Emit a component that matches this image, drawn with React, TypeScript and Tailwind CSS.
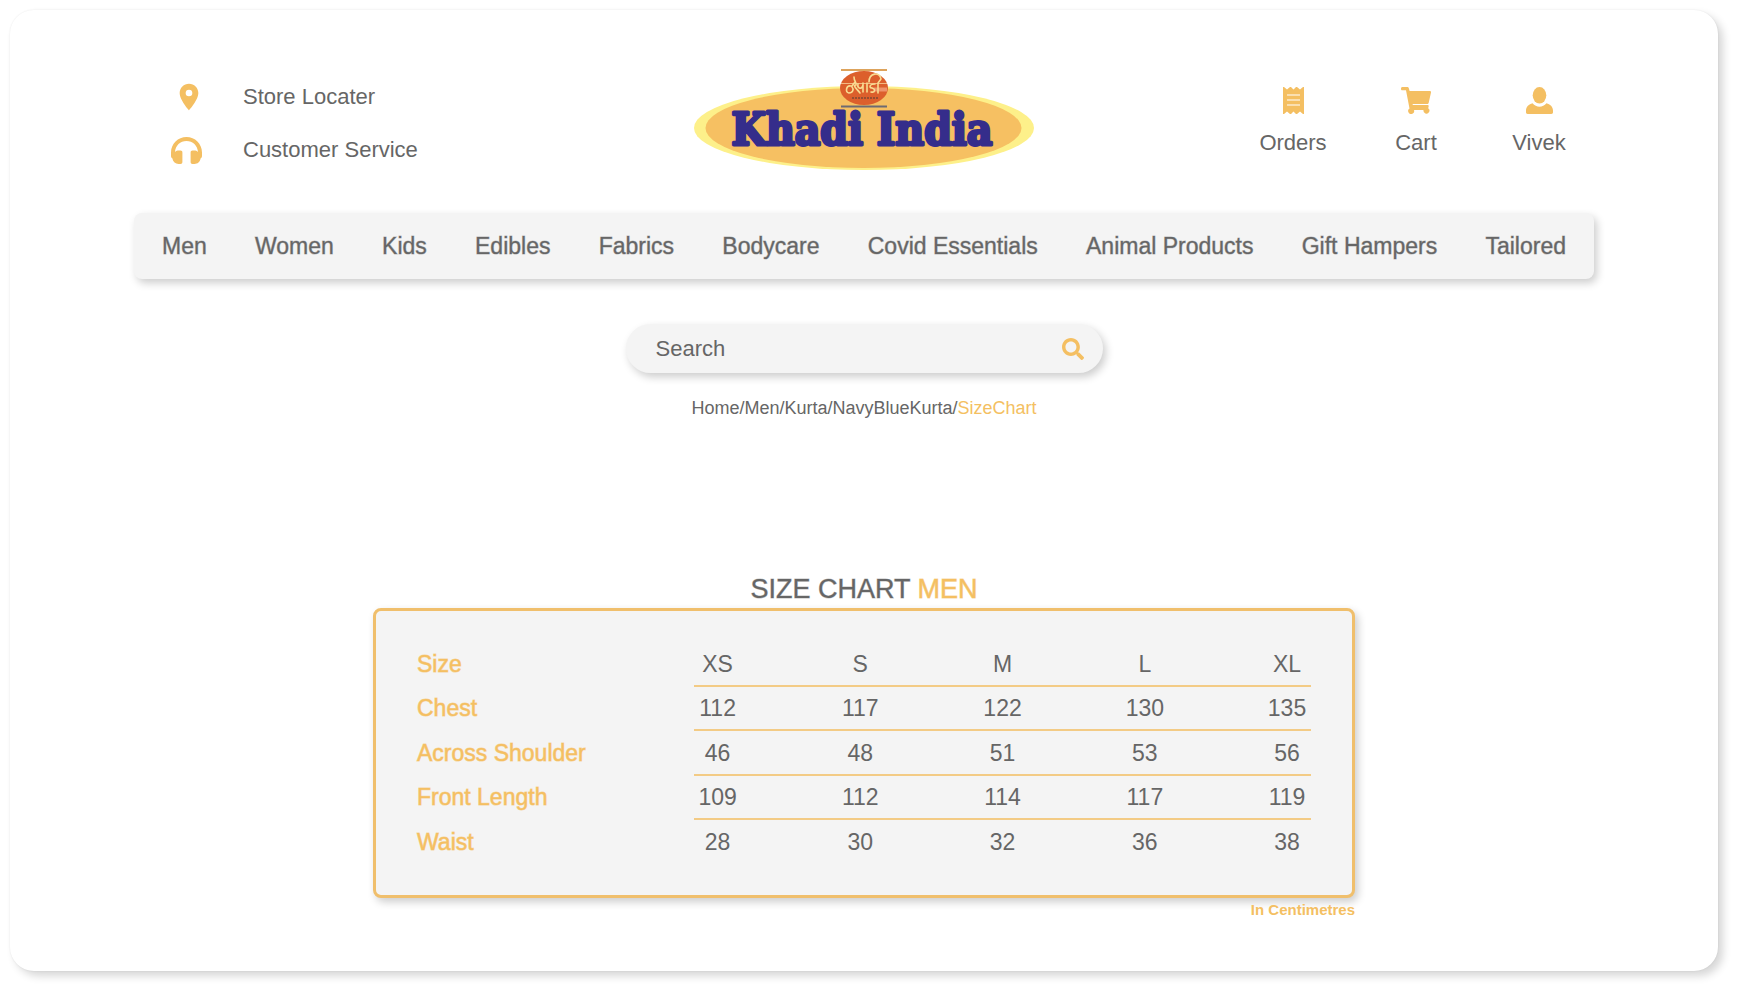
import { useState } from "react";
import { FaSearch } from "react-icons/fa";
import { MdLocationOn } from "react-icons/md";

const categories = [
  "Men",
  "Women",
  "Kids",
  "Edibles",
  "Fabrics",
  "Bodycare",
  "Covid Essentials",
  "Animal Products",
  "Gift Hampers",
  "Tailored",
];

const crumbs = ["Home", "Men", "Kurta", "NavyBlueKurta"];

const sizes = ["XS", "S", "M", "L", "XL"];

const measurements = [
  { label: "Chest", values: [112, 117, 122, 130, 135] },
  { label: "Across Shoulder", values: [46, 48, 51, 53, 56] },
  { label: "Front Length", values: [109, 112, 114, 117, 119] },
  { label: "Waist", values: [28, 30, 32, 36, 38] },
];

function HeadphonesIcon() {
  return (
    <svg viewBox="0 0 31 27" className="h-[27px] w-[31px]" fill="currentColor" aria-hidden="true">
      <path d="M15.5 0C24 0 31 6.800 31 15.500V19c0 1.300-.6 1.800-1.300 2.300C29 25 26.500 27 23.500 27h-2c-1.200 0-1.900-.7-1.900-1.900V15.500c0-1.200.7-1.900 1.900-1.900h1.500c1.700 0 2.900.5 4 1.400C26.500 8.500 21.800 4 15.500 4S4.500 8.500 4 15c1.100-.9 2.300-1.400 4-1.400h1.500c1.200 0 1.900.7 1.900 1.900v9.600c0 1.200-.7 1.900-1.900 1.900h-2c-3 0-5.500-2-6.200-5.700C.6 20.800 0 20.300 0 19v-3.500C0 6.800 7 0 15.500 0Z" />
    </svg>
  );
}

function ReceiptIcon() {
  return (
    <svg viewBox="0 0 21 27" className="h-[27px] w-[21px]" aria-hidden="true">
      <path
        fill="currentColor"
        d="M0 0h1l3 2.500L7 0h1l2.500 2.500L13 0h1l3 2.500L20 0h1v27h-1l-3-2.500-3 2.500h-1l-2.500-2.500L8 27H7l-3-2.500L1 27H0Z"
      />
      <path d="M4 8h13M4 13h13M4 18h13" stroke="#fff" strokeWidth="1.200" />
    </svg>
  );
}

function CartIcon() {
  return (
    <svg viewBox="0 0 30 27" className="h-[27px] w-[30px]" fill="currentColor" aria-hidden="true">
      <path d="M1.300 0H6c1 0 1.600.5 1.900 1.400L8.600 4H29c.8 0 1.200.6 1 1.400l-2.300 10.400c-.2.800-.7 1.200-1.500 1.200H11.600l.2 1h14.700c1 0 1.300.5 1.100 1.400l-.4 1.800a3 3 0 1 1-4.700 1.800H13a3 3 0 1 1-4.500-1.500L5 3.300H1.300C.4 3.300 0 2.600 0 1.700S.4 0 1.300 0Z" />
    </svg>
  );
}

function PersonIcon() {
  return (
    <svg viewBox="0 0 27 27" className="size-[27px]" fill="currentColor" aria-hidden="true">
      <ellipse cx="13.500" cy="8.300" rx="6.800" ry="8.300" />
      <path d="M6.500 16.300c2 2.200 4.300 3.400 7 3.400s5-1.200 7-3.400c3.500.8 6.500 3.600 6.500 7.200v1.800c0 1.100-.6 1.700-1.700 1.700H1.700C.6 27 0 26.400 0 25.300v-1.800c0-3.600 3-6.400 6.500-7.200Z" />
    </svg>
  );
}

function Logo() {
  return (
    <svg viewBox="0 0 340 104" className="h-[104px] w-[340px]" role="img" aria-label="Khadi India">
      <ellipse cx="170" cy="60" rx="170" ry="42" fill="#fdf08a" />
      <ellipse cx="169.500" cy="60" rx="158" ry="40" fill="#f6c062" />
      <ellipse cx="170" cy="20" rx="24" ry="17" fill="#dc5f2c" />
      <path d="M147 2h46" stroke="#dda35c" strokeWidth="2" />
      <path d="M147 38.500h46" stroke="#6d6a72" strokeWidth="2" />
      <path d="M147 15.500h46" stroke="#f3b983" strokeWidth="1" />
      <path d="M180 21.500h13" stroke="#ee936b" strokeWidth="4" />
      <path
        d="M157 18c-5-1-6 6-2 7 4 0 5-4 3-6M160 9c0 5 3 5 2 8-4 0 1 4 4 8M161 14l-3 4M164 16c-1 5 4 6 5 1M169 15v9M173 15v9M181 16c-6 0-6 4-3 4 4 1 3 5-1 4M184 15v10M175 14c0-9 11-11 12-3M187 11l-3 4"
        fill="none"
        stroke="#f8dc92"
        strokeWidth="1.600"
        strokeLinecap="round"
      />
      <path d="M158 30h26" stroke="#7c4a34" strokeWidth="1.500" strokeDasharray="2 1" />
      <text
        x="168"
        y="77"
        textAnchor="middle"
        fontSize="44"
        fontWeight="700"
        fill="#352d8b"
        stroke="#352d8b"
        strokeWidth="3"
        strokeLinejoin="round"
        className="font-['DejaVu_Serif_Condensed','DejaVu_Serif',serif]"
      >
        Khadi India
      </text>
    </svg>
  );
}

export default function App() {
  const [query, setQuery] = useState("");

  return (
    <div className="min-h-screen bg-white pt-[10px] pr-[20px] pb-[20px] pl-[10px] font-['Liberation_Sans',Arial,sans-serif] text-[22px] leading-[26px] text-[#666]">
      <main className="min-h-[961px] rounded-3xl bg-white px-[124px] pt-[58px] pb-12 shadow-[5px_5px_8px_rgba(0,0,0,0.16),0_0_2px_rgba(0,0,0,0.08)]">
        {/* ── Header ── */}
        <header className="grid grid-cols-[1fr_auto_1fr] items-start">
          <ul className="flex flex-col gap-[27px] pt-[16px] pl-[37px]">
            <li>
              <a href="#stores" className="flex items-center gap-[37px]">
                <span className="-my-1 flex w-[35px] justify-center text-[#f4bf62]">
                  <MdLocationOn size={32} />
                </span>
                Store Locater
              </a>
            </li>
            <li>
              <a href="#support" className="flex items-center gap-[37px]">
                <span className="-my-1 flex w-[35px] text-[#f4bf62]">
                  <HeadphonesIcon />
                </span>
                Customer Service
              </a>
            </li>
          </ul>

          <a href="#home">
            <Logo />
          </a>

          <nav aria-label="Account" className="pt-[19px]">
            <ul className="flex justify-end gap-[13px]">
              <li className="w-[110px]">
                <a href="#orders" className="flex flex-col items-center gap-[16px]">
                  <span className="text-[#f4bf62]">
                    <ReceiptIcon />
                  </span>
                  Orders
                </a>
              </li>
              <li className="w-[110px]">
                <a href="#cart" className="flex flex-col items-center gap-[16px]">
                  <span className="text-[#f4bf62]">
                    <CartIcon />
                  </span>
                  Cart
                </a>
              </li>
              <li className="w-[110px]">
                <a href="#account" className="flex flex-col items-center gap-[16px]">
                  <span className="text-[#f4bf62]">
                    <PersonIcon />
                  </span>
                  Vivek
                </a>
              </li>
            </ul>
          </nav>
        </header>

        {/* ── Categories ── */}
        <nav
          aria-label="Categories"
          className="mt-[41px] rounded-lg bg-[#f4f4f4] px-[28px] py-[20px] shadow-[3px_4px_8px_rgba(0,0,0,0.2)]"
        >
          <ul className="flex justify-between text-[23px] [-webkit-text-stroke:1px_rgba(102,102,102,0.4)]">
            {categories.map((name) => (
              <li key={name}>
                <a href="#category">{name}</a>
              </li>
            ))}
          </ul>
        </nav>

        {/* ── Search ── */}
        <form
          role="search"
          onSubmit={(e) => e.preventDefault()}
          className="mx-auto mt-[45px] flex h-[49px] max-w-[477px] items-center rounded-full bg-[#f4f4f4] pr-[19px] pl-[30px] shadow-[3px_4px_8px_rgba(0,0,0,0.2)]"
        >
          <input
            aria-label="Search"
            placeholder="Search"
            value={query}
            onChange={(e) => setQuery(e.target.value)}
            className="min-w-0 flex-1 bg-transparent outline-none placeholder:text-[#666]"
          />
          <button type="submit" aria-label="Submit search" className="text-[#f4bf62]">
            <FaSearch size={22} />
          </button>
        </form>

        <nav aria-label="Breadcrumb" className="mt-[22px] text-center text-[18px]">
          {crumbs.map((crumb) => (
            <span key={crumb}>
              <a href="#crumb">{crumb}</a>/
            </span>
          ))}
          <a href="#size-chart" aria-current="page" className="text-[#f4bf62]">
            SizeChart
          </a>
        </nav>

        {/* ── Size chart ── */}
        <section className="mx-auto mt-[152px] max-w-[982px]">
          <h1 className="pb-[3px] text-center text-[27px] leading-[32px] [-webkit-text-stroke:1px_rgba(102,102,102,0.4)]">
            SIZE CHART{" "}
            <span className="text-[#f4bf62] [-webkit-text-stroke:1px_rgba(244,191,98,0.6)]">MEN</span>
          </h1>

          <div className="rounded-lg border-3 border-[#f0bf6c] bg-[#f4f4f4] px-[41px] pt-[32px] pb-[30px] shadow-[3px_4px_8px_rgba(0,0,0,0.2)]">
            <table className="w-full table-fixed border-separate border-spacing-0 text-center text-[23px]">
              <colgroup>
                <col className="w-[31%]" />
                <col className="w-[95px]" />
                <col />
                <col />
                <col />
                <col className="w-[95px]" />
              </colgroup>
              <thead>
                <tr className="h-[44px]">
                  <th
                    scope="col"
                    className="border-b-2 border-transparent text-left font-normal text-[#f4bf62] [-webkit-text-stroke:1px_rgba(244,191,98,0.6)]"
                  >
                    Size
                  </th>
                  {sizes.map((size) => (
                    <th
                      key={size}
                      scope="col"
                      className="border-b-2 border-[#f3cb85] font-normal last:pl-[47px] nth-2:pr-[48px]"
                    >
                      {size}
                    </th>
                  ))}
                </tr>
              </thead>
              <tbody className="[&>tr:last-child>td]:border-transparent">
                {measurements.map(({ label, values }) => (
                  <tr key={label} className="h-[44px] even:h-[45px]">
                    <th
                      scope="row"
                      className="border-b-2 border-transparent text-left font-normal text-[#f4bf62] [-webkit-text-stroke:1px_rgba(244,191,98,0.6)]"
                    >
                      {label}
                    </th>
                    {values.map((value, i) => (
                      <td
                        key={sizes[i]}
                        className="border-b-2 border-[#f3cb85] last:pl-[47px] nth-2:pr-[48px]"
                      >
                        {value}
                      </td>
                    ))}
                  </tr>
                ))}
              </tbody>
            </table>
          </div>

          <p className="text-right text-[15px] leading-[24px] font-bold text-[#f4bf62]">
            In Centimetres
          </p>
        </section>
      </main>
    </div>
  );
}
